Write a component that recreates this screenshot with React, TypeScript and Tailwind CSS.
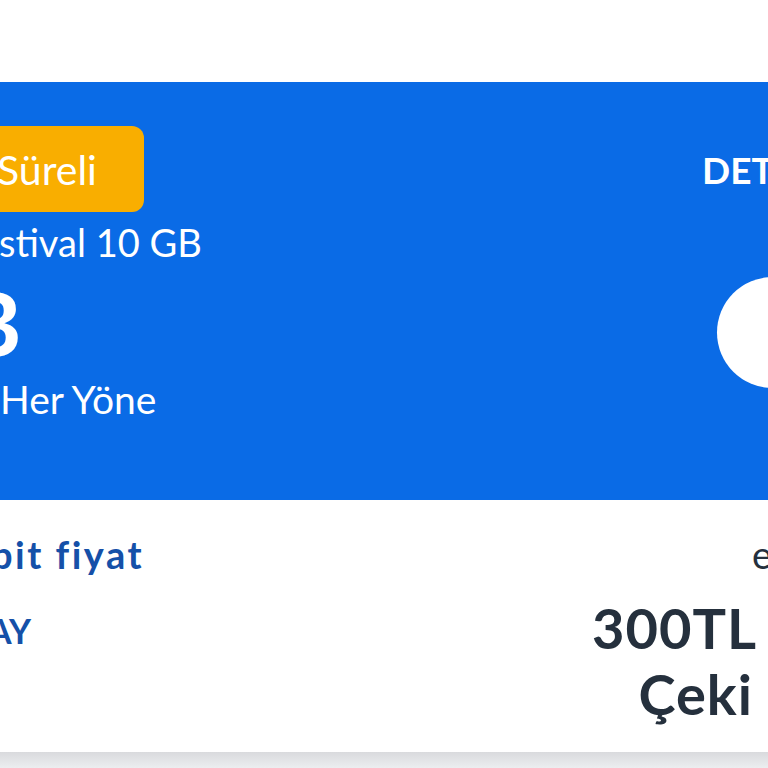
import React from "react";

export default function App() {
  return (
    <div
      className="w-[768px] h-[768px] overflow-hidden bg-white flex flex-col"
      style={{ fontFamily: "Lato, 'Noto Sans', sans-serif" }}
    >
      <div className="h-[82px] shrink-0" />
      <div className="h-[418px] shrink-0 bg-[#0a6be6] flex justify-between text-white">
        <div className="flex flex-col pt-[44px]">
          <div className="-ml-[40px] w-[184px] h-[86px] rounded-[12px] bg-[#f9ae00] flex items-center pl-[37px] text-[41px] leading-none whitespace-nowrap">
            Süreli
          </div>
          <div className="mt-[6px] -ml-[1px] text-[38px] leading-[48px] whitespace-nowrap">stival 10 GB</div>
          <div className="mt-[16px] -ml-[103px] text-[90px] font-bold leading-[80px] whitespace-nowrap">GB</div>
          <div className="mt-[13px] text-[39px] leading-[48px] whitespace-nowrap">Her Yöne</div>
        </div>
        <div className="w-[66px] flex flex-col pt-[68px]">
          <div className="text-[37px] font-bold leading-[40px] whitespace-nowrap">DETAY</div>
          <div className="mt-[87px] ml-[15px] w-[111px] h-[111px] shrink-0 rounded-full bg-white" />
        </div>
      </div>
      <div className="h-[252px] shrink-0 flex justify-between">
        <div className="flex flex-col pt-[30px]">
          <div className="-ml-[9px] text-[38px] font-bold tracking-[2.5px] leading-[48px] text-[#1550a8] whitespace-nowrap">bit fiyat</div>
          <div className="mt-[33px] -ml-[12px] text-[34px] font-bold leading-[40px] text-[#1550a8] whitespace-nowrap">AY</div>
        </div>
        <div className="w-[176px] flex flex-col pt-[30px] text-[#25303d]">
          <div className="ml-[160px] text-[38px] leading-[48px] whitespace-nowrap">ek</div>
          <div className="mt-[17px] pr-[15px] text-right text-[56px] font-bold tracking-[1px] leading-[66px] whitespace-nowrap">300TL</div>
          <div className="pr-[15px] text-right text-[56px] font-bold tracking-[1px] leading-[66px] whitespace-nowrap">Çeki</div>
        </div>
      </div>
      <div className="h-[16px] shrink-0 bg-gradient-to-b from-[#d9dadd] to-[#eceef0]" />
    </div>
  );
}
